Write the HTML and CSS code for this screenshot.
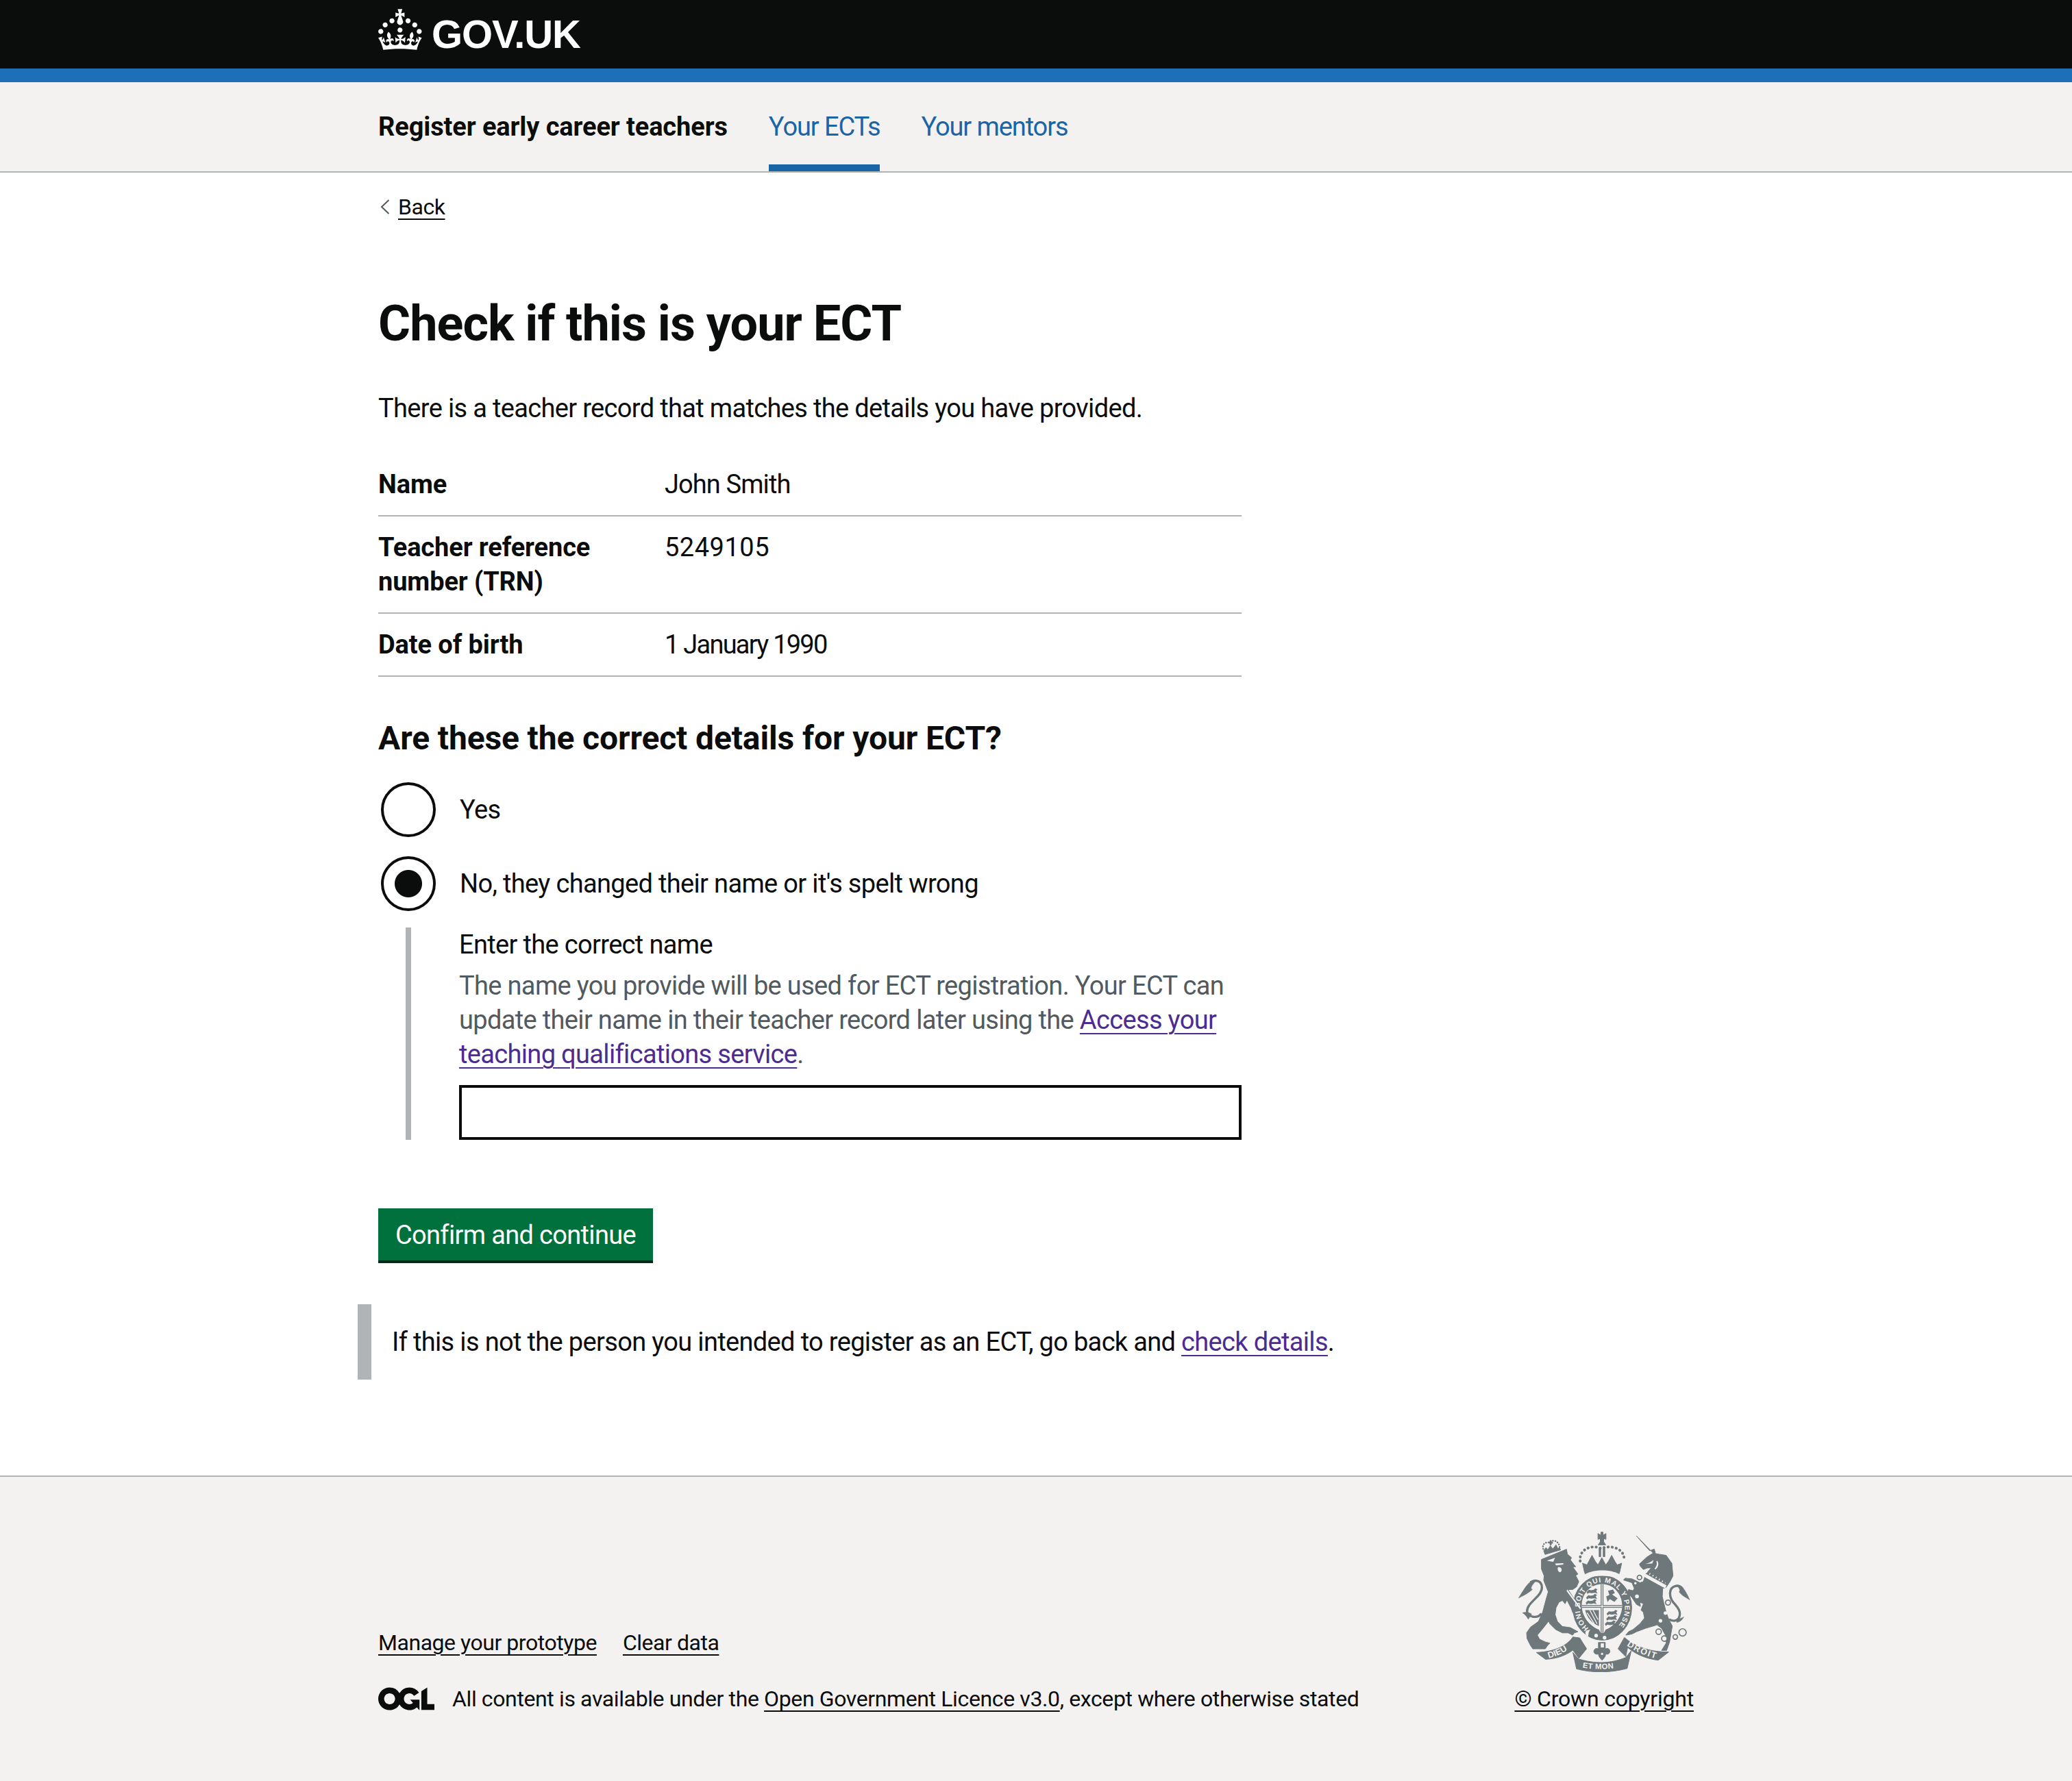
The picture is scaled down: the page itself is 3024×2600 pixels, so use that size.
FILE: index.html
```
<!DOCTYPE html>
<html lang="en">
<head>
<meta charset="utf-8">
<title>Check if this is your ECT</title>
<link rel="stylesheet" href="styles.css">
</head>
<body>
<header class="site-header">
  <div class="container header-inner">
    <svg class="crown" viewBox="0 0 32.2 30" width="64" height="60" aria-hidden="true"><path fill="currentColor" d="M22.6 10.4c-1 .4-2-.1-2.4-1-.4-.9.1-2 1-2.4.9-.4 2 .1 2.4 1s-.1 2-1 2.4m-5.9 6.7c-.9.4-2-.1-2.4-1-.4-.9.1-2 1-2.4.9-.4 2 .1 2.4 1s-.1 2-1 2.4m10.8-3.7c-1 .4-2-.1-2.4-1-.4-.9.1-2 1-2.4.9-.4 2 .1 2.4 1s0 2-1 2.4m3.3 4.8c-1 .4-2-.1-2.4-1-.4-.9.1-2 1-2.4.9-.4 2 .1 2.4 1s-.1 2-1 2.4M17 4.7l2.3 1.2V2.5l-2.3.7-.2-.2.9-3h-3.4l.9 3-.2.2c-.1.1-2.3-.7-2.3-.7v3.4L15 4.7c.1.1.1.2.2.2l-1.3 4c-.1.2-.1.4-.1.6 0 1.1.8 2 1.9 2.2h.7c1-.2 1.9-1.1 1.9-2.2 0-.2 0-.4-.1-.6l-1.3-4c-.1-.1 0-.2.1-.2m-7.6 5.7c.9.4 2-.1 2.4-1 .4-.9-.1-2-1-2.4-.9-.4-2 .1-2.4 1s0 2 1 2.4m-5 3c.9.4 2-.1 2.4-1 .4-.9-.1-2-1-2.4-.9-.4-2 .1-2.4 1s.1 2 1 2.4m-3.2 4.8c.9.4 2-.1 2.4-1 .4-.9-.1-2-1-2.4-.9-.4-2 .1-2.4 1s0 2 1 2.4m14.8 11c4.4 0 8.6.3 12.3.8 1.1-4.5 2.4-7 3.7-8.8l-2.5-.9c.2 1.3.3 1.9 0 2.7-.4-.4-.8-1.1-1.1-2.3l-1.2 4c.7-.5 1.3-.8 2-.9-1.1 2.5-2.6 3.1-3.5 3-1.1-.2-1.7-1.2-1.5-2.1.3-1.2 1.5-1.5 2.1-.1 1.1-2.3-.8-3-2-2.3 1.9-1.9 2.1-3.5.6-5.6-2.1 1.6-2.1 3.2-1.2 5.5-1.2-1.4-3.2-.6-2.5 1.6.9-1.4 2.1-.5 1.9.8-.2 1.1-1.7 2.1-3.5 1.9-2.7-.2-2.9-2.1-2.9-3.6.7-.1 1.9.5 2.9 1.9l.4-4.3c-1.1 1.1-2.1 1.4-3.2 1.4.4-1.2 2.1-3 2.1-3h-5.4s1.7 1.9 2.1 3c-1.1 0-2.1-.2-3.2-1.4l.4 4.3c1-1.4 2.2-2 2.9-1.9-.1 1.5-.2 3.4-2.9 3.6-1.9.2-3.4-.8-3.5-1.9-.2-1.3 1-2.2 1.9-.8.7-2.3-1.2-3-2.5-1.6.9-2.2.9-3.9-1.2-5.5-1.5 2-1.3 3.7.6 5.6-1.2-.7-3.1 0-2 2.3.6-1.4 1.8-1.1 2.1.1.2.9-.3 1.9-1.5 2.1-.9.2-2.4-.5-3.5-3 .6 0 1.2.3 2 .9l-1.2-4c-.3 1.1-.7 1.9-1.1 2.3-.3-.8-.2-1.4 0-2.7l-2.9.9C1.3 23 2.6 25.5 3.7 30c3.7-.5 7.9-.8 12.3-.8"/></svg>
    <span class="logotype">GOV.UK</span>
  </div>
</header>

<nav class="service-nav">
  <div class="container service-inner">
    <span class="service-name">Register early career teachers</span>
    <a class="nav-link nav-link-active" href="#">Your ECTs</a>
    <a class="nav-link" href="#">Your mentors</a>
  </div>
</nav>

<div class="container">
  <a class="back-link" href="#">
    <svg class="back-chevron" viewBox="0 0 14 22" width="14" height="22" aria-hidden="true"><path d="M12.5 1 2 11l10.5 10" fill="none" stroke="#505a5f" stroke-width="2"/></svg>
    <span class="back-text">Back</span>
  </a>

  <main class="main">
    <h1 class="title">Check if this is your ECT</h1>
    <p class="intro">There is a teacher record that matches the details you have provided.</p>

    <dl class="summary">
      <div class="summary-row"><dt>Name</dt><dd class="value-name">John Smith</dd></div>
      <div class="summary-row"><dt>Teacher reference number (TRN)</dt><dd class="value-trn">5249105</dd></div>
      <div class="summary-row"><dt>Date of birth</dt><dd class="value-date">1 January 1990</dd></div>
    </dl>

    <form class="form">
      <h2 class="question">Are these the correct details for your ECT?</h2>
      <div class="radio-item">
        <input class="radio-input" type="radio" name="correct" id="yes">
        <label class="radio-label" for="yes">Yes</label>
      </div>
      <div class="radio-item">
        <input class="radio-input" type="radio" name="correct" id="no" checked>
        <label class="radio-label" for="no">No, they changed their name or it's spelt wrong</label>
      </div>
      <div class="conditional">
        <label class="field-label" for="name">Enter the correct name</label>
        <div class="hint">The name you provide will be used for ECT registration. Your ECT can update their name in their teacher record later using the <a class="visited" href="#">Access your teaching qualifications service</a>.</div>
        <input class="text-input" type="text" id="name">
      </div>
      <button class="button" type="button">Confirm and continue</button>
    </form>

    <div class="inset">If this is not the person you intended to register as an ECT, go back and <a class="visited" href="#">check details</a>.</div>
  </main>
</div>

<footer class="footer">
  <div class="container footer-inner">
    <div class="footer-meta">
      <div class="footer-links">
        <a class="footer-link" href="#">Manage your prototype</a>
        <a class="footer-link" href="#">Clear data</a>
      </div>
      <div class="licence">
        <svg class="ogl" viewBox="0 0 483.2 195.7" width="82" height="34" aria-hidden="true"><path fill="currentColor" d="M421.5 142.8V.1l-50.7 32.3v161.1h112.4v-50.7zm-122.3-9.6A47.12 47.12 0 0 1 221 97.8c0-26 21.1-47.1 47.1-47.1 16.7 0 31.4 8.7 39.7 21.8l42.7-27.2A97.63 97.63 0 0 0 268.1 0c-36.5 0-68.3 20.1-85.1 49.7A98 98 0 0 0 97.8 0C43.9 0 0 43.9 0 97.8s43.9 97.8 97.8 97.8c36.5 0 68.3-20.1 85.1-49.7a97.76 97.76 0 0 0 149.6 25.4l19.4 22.2h3v-87.8h-80l24.3 27.5zM97.8 145c-26 0-47.1-21.1-47.1-47.1s21.1-47.1 47.1-47.1 47.2 21 47.2 47S123.8 145 97.8 145"/></svg>
        <span>All content is available under the <a class="footer-link" href="#">Open Government Licence v3.0</a>, except where otherwise stated</span>
      </div>
    </div>
    <div class="footer-crest">
      <svg class="crest" viewBox="105 76 755 616" width="252" height="205" aria-hidden="true">
        <defs>
          <path id="garter" d="M415 499A99 112 0 1 1 535 499"/>
          <path id="ribLeft" d="M236 632C280 622 322 602 352 570"/>
          <path id="ribMid" d="M386 672C440 682 510 682 560 668"/>
          <path id="ribRight" d="M580 574C620 602 670 624 728 638"/>
          <path id="beast" d="M-24 3-14-7-4-5 8-7 14-13 24-9 18-2 24 9 12 6-2 8-12 6-20 11Z"/>
        </defs>
        <g class="crest-dark crest-soft">
          <!-- lion's crown -->
          <path d="M224 176 218 160 228 146 236 156 247 138 258 152 272 134 280 150 288 146 292 156Z"/>
          <path d="M241 122h5v-7h5v7h6v5h-6v8h-5v-8h-5z"/>
          <!-- lion -->
          <path d="M208 198 318 153 322 175 340 190 335 200 358 230 345 230 368 262 358 268 372 295 362 318 345 330 325 330 380 415 382 432 365 432 358 445 345 430 338 410 328 392 320 375 312 392 300 378 285 385 272 410 268 440 278 470 300 492 335 497 368 515 352 520 345 530 325 520 300 520 270 505 245 480 240 468 215 500 190 530 200 548 225 560 245 565 235 575 225 590 195 590 170 590 160 575 145 545 143 520 160 495 195 470 213 430 232 360 238 340 218 290 220 270 208 240Z"/>
          <!-- unicorn -->
          <path d="M625 95 683 160 703 152 708 172 725 175 755 180 780 215 785 270 772 295 755 320 740 325 738 360 745 390 755 430 767 462 782 490 775 530 770 560 757 597 735 597 755 565 752 530 735 500 715 485 665 500 625 515 605 525 578 530 590 515 610 505 640 480 660 455 655 430 645 420 655 392 640 385 642 404 625 395 605 365 585 345 590 330 610 335 615 325 605 300 568 288 575 280 605 283 640 300 655 295 665 262 690 235 672 235 655 242 642 228 638 218 670 188 698 170Z"/>
          <!-- shield crown -->
          <path d="M396 250 388 214 408 222 416 206 430 180 444 206 456 222 473 190 490 222 502 206 516 180 530 206 540 222 560 214 552 250Z"/>
          <path d="M466 120V106L456 110V84L469 92V78H478V92L491 84V110L481 106V120L490 134H457Z"/>
          <path d="M461 150h7v36h-7zM479 150h7v36h-7z"/>
          <path d="M396 250C440 236 510 236 552 250L548 262H400Z"/>
          <!-- garter -->
          <ellipse cx="475" cy="410" rx="129" ry="142"/>
          <!-- fleur -->
          <path d="M458 562h30v28c14-6 22 4 20 14-2 8-10 12-18 8 0 10-6 18-16 28-10-10-16-18-16-28-8 4-18 0-20-8-2-10 8-20 20-14z"/>
          <!-- ribbons -->
          <path d="M186 606C270 602 320 576 346 538L376 542 406 590 372 632 346 596C310 622 270 634 226 636Z"/>
          <path d="M346 606 370 634C440 656 510 656 578 628L602 598 584 676C510 696 430 696 362 678Z"/>
          <path d="M544 590 572 540C620 584 690 604 766 604L720 640C660 632 620 612 586 584L578 624Z"/>
        </g>
        <g class="crest-line">
          <path class="crest-pearls" d="M378 205C372 155 425 130 470 150C520 130 578 155 570 205"/>
          <path class="crest-pearls-small" d="M216 152C208 125 235 120 245 124C255 108 285 115 288 145"/>
          <path class="crest-tail" d="M208 435C190 460 145 450 145 425C145 385 212 360 210 320C210 290 180 285 160 298"/>
          <path class="crest-tail" d="M768 460C790 475 815 465 815 435C815 400 770 390 772 345C775 310 815 305 828 328"/>
          <path class="crest-tuft" d="M188 288C160 282 140 315 108 367C130 355 145 350 168 330C155 325 170 305 188 288Z"/>
          <path class="crest-tuft" d="M125 432C140 428 152 428 165 438L150 460C145 448 135 438 125 432Z"/>
          <path class="crest-tuft" d="M800 310C825 305 845 345 858 375C838 362 825 358 812 340C820 335 810 320 800 310Z"/>
          <path class="crest-tuft" d="M800 462C815 458 825 455 832 450C826 464 815 472 802 474Z"/>
        </g>
        <g class="crest-ring">
          <circle cx="638" cy="277" r="10"/><circle cx="620" cy="302" r="8"/><circle cx="627" cy="360" r="11"/>
          <circle cx="763" cy="387" r="11"/>
          <circle cx="722" cy="515" r="12"/><circle cx="747" cy="545" r="12"/><circle cx="795" cy="538" r="10"/><circle cx="827" cy="518" r="16"/>
        </g>
        <g class="crest-light">
          <path d="M400 262C440 240 510 240 550 262 554 270 548 276 540 280 500 266 445 266 410 280 402 276 398 270 400 262Z"/>
          <path d="M385 400C385 345 425 308 473 306C525 306 562 350 562 400C562 450 530 490 490 506L482 520H468L460 506C420 490 385 450 385 400Z"/>
          <circle cx="752" cy="433" r="8"/><circle cx="730" cy="467" r="8"/>
          <circle cx="448" cy="532" r="8"/><circle cx="485" cy="541" r="8"/>
          <path d="M404 510C398 520 400 532 412 538 416 528 412 520 422 506Z"/>
          <path d="M660 258 757 312 750 325 655 272Z"/>
          <path d="M664 217C680 214 690 208 700 200L694 216Z"/>
          <path d="M716 204C724 216 722 230 708 242L704 238C714 228 716 216 712 206Z"/>
          <path d="M232 204 268 190 260 208Z"/>
          <path d="M280 232C298 228 302 250 290 254 280 252 278 242 280 232Z"/>
          <path d="M268 216 304 214 304 220 272 224Z"/>
          <path d="M322 330 382 412 377 416 318 336Z"/>
          <path d="M468 566h14v18h-14z"/><circle cx="474" cy="612" r="5"/>
        </g>
        <path class="crest-collar" d="M668 252 752 302"/>
        <g class="crest-dark">
          <rect x="468" y="306" width="12" height="214"/>
          <rect x="385" y="398" width="177" height="12"/>
        </g>
        <g class="crest-light"><rect x="472" y="306" width="4" height="214"/><rect x="385" y="402" width="177" height="4"/></g>
        <g class="crest-dark crest-beasts">
          <use href="#beast" x="430" y="338"/><use href="#beast" x="428" y="362"/><use href="#beast" x="426" y="385"/>
          <use href="#beast" x="518" y="432"/><use href="#beast" x="516" y="455"/><use href="#beast" x="510" y="478"/>
          <path d="M500 335 522 330 530 345 518 352 542 368 528 384 508 372 498 385 492 360 506 354Z"/>
          <path d="M400 420H460V490C430 478 408 455 400 420Z"/>
        </g>
        <path class="crest-harp" d="M420 420 452 480M434 420 456 462M408 432 440 480"/>
        <g class="crest-text">
          <text class="garter-text"><textPath href="#garter" textLength="515" lengthAdjust="spacing">HONI SOIT QUI MAL Y PENSE</textPath></text>
          <text class="ribbon-text"><textPath href="#ribLeft" startOffset="4">DIEU</textPath></text>
          <text class="ribbon-mid"><textPath href="#ribMid" startOffset="2">ET MON</textPath></text>
          <text class="ribbon-text"><textPath href="#ribRight" startOffset="2" textLength="140" lengthAdjust="spacing">DROIT</textPath></text>
        </g>
      </svg>
      <a class="footer-link copyright" href="#">© Crown copyright</a>
    </div>
  </div>
</footer>
</body>
</html>
```
FILE: styles.css
```
* { box-sizing: border-box; }

body {
  margin: 0;
  font-family: Roboto, "Liberation Sans", sans-serif;
  font-size: 38px;
  line-height: 50px;
  letter-spacing: -0.66px;
  color: #0b0c0c;
  background: #fff;
}

.container { width: 1920px; margin: 0 auto; }

/* Header */
.site-header {
  height: 120px;
  background: #0b0c0c;
  border-bottom: 20px solid #1d70b8;
  color: #fff;
}
.header-inner { display: flex; align-items: center; height: 100px; gap: 14px; }
.crown { display: block; flex: none; margin-top: -14px; }
.logotype {
  font-family: "Liberation Sans", Arial, sans-serif;
  font-size: 58px;
  font-weight: 700;
  line-height: 60px;
  letter-spacing: -1.1px;
}

/* Service navigation */
.service-nav { height: 132px; background: #f3f2f1; border-bottom: 2px solid #b1b4b6; }
.service-inner { display: flex; height: 130px; align-items: stretch; gap: 60px; }
.service-name { display: flex; align-items: center; font-weight: 700; letter-spacing: -0.11px; }
.nav-link {
  display: flex;
  align-items: center;
  padding-top: 10px;
  border-bottom: 10px solid transparent;
  color: #1a65a6;
  text-decoration: none;
  letter-spacing: -1.1px;
}
.nav-link-active { border-bottom-color: #1a65a6; }

/* Back link */
.back-link {
  display: flex;
  width: max-content;
  align-items: center;
  gap: 12px;
  margin: 30px 0 0 3px;
  font-size: 32px;
  line-height: 40px;
  letter-spacing: -0.46px;
  color: #0b0c0c;
  text-decoration: none;
}
.back-chevron { display: block; flex: none; }
.back-text {
  text-decoration: underline;
  text-decoration-thickness: 2px;
  text-underline-offset: 6px;
}

/* Main */
.main { padding-top: 111px; padding-bottom: 140px; }
.title {
  margin: 0 0 58px;
  font-size: 72px;
  line-height: 80px;
  font-weight: 700;
  letter-spacing: -0.98px;
}
.intro { margin: 0 0 41px; }

.summary { width: 1260px; margin: 0 0 60px; }
.summary-row { display: flex; border-bottom: 2px solid #b1b4b6; padding: 20px 0; }
.summary-row dt { width: 378px; margin-right: 40px; font-weight: 700; letter-spacing: -0.11px; flex: none; }
.summary-row dd { margin: 0; }
.summary-row .value-name { letter-spacing: -0.9px; }
.summary-row .value-trn { letter-spacing: 0.5px; }
.summary-row .value-date { letter-spacing: -1.75px; }

.form { width: 1260px; }
.question { margin: 0 0 30px; font-size: 48px; line-height: 60px; font-weight: 700; letter-spacing: -0.12px; }

.radio-item { display: flex; align-items: center; min-height: 88px; margin-bottom: 20px; }
.radio-input {
  appearance: none;
  flex: none;
  width: 80px;
  height: 80px;
  margin: 0 0 0 4px;
  border: 4px solid #0b0c0c;
  border-radius: 50%;
  background: #fff;
}
.radio-input:checked { background: radial-gradient(circle closest-side, #0b0c0c 19.5px, #fff 20.5px); }
.radio-label { margin-left: 35px; }

.conditional { margin-left: 40px; padding-left: 70px; border-left: 8px solid #b1b4b6; }
.field-label { display: block; margin-bottom: 10px; }
.hint { margin-bottom: 20px; color: #505a5f; }
.visited { color: #4c2c92; text-decoration: underline; text-decoration-thickness: 2px; text-underline-offset: 6px; }
.text-input {
  display: block;
  width: 100%;
  height: 80px;
  padding: 10px;
  border: 4px solid #0b0c0c;
  border-radius: 0;
  background: #fff;
  font: inherit;
  outline: none;
}

.button {
  display: block;
  width: 401px;
  height: 76px;
  margin: 100px 0 64px;
  padding: 2px 0 0;
  border: 0;
  background: #00703c;
  box-shadow: 0 4px 0 #002d18;
  color: #fff;
  font: inherit;
  letter-spacing: inherit;
}

.inset {
  width: max-content;
  margin-left: -30px;
  padding: 30px;
  border-left: 20px solid #b1b4b6;
}

/* Footer */
.footer {
  height: 446px;
  padding: 80px 0 100px;
  background: #f3f2f1;
  border-top: 2px solid #b1b4b6;
  font-size: 32px;
  line-height: 40px;
  letter-spacing: -0.46px;
}
.footer-inner { display: flex; justify-content: space-between; align-items: flex-end; }
.footer-links { display: flex; gap: 38px; margin-bottom: 42px; }
.footer-link {
  color: #0b0c0c;
  text-decoration: underline;
  text-decoration-thickness: 2px;
  text-underline-offset: 6px;
}
.licence { display: flex; align-items: center; gap: 26px; letter-spacing: -0.38px; }
.ogl { display: block; flex: none; color: #0b0c0c; }
.footer-crest { display: flex; flex-direction: column; align-items: center; }
.copyright { letter-spacing: -0.2px; }

/* Royal arms */
.crest { display: block; margin-bottom: 19px; }
.crest-dark { fill: #6e7779; }
.crest-soft { stroke: #6e7779; stroke-width: 3px; stroke-linejoin: round; }
.crest-light { fill: #f3f2f1; }
.crest-line { fill: none; stroke: #6e7779; }
.crest-pearls { stroke-width: 12px; stroke-dasharray: 1 17; stroke-linecap: round; }
.crest-pearls-small { stroke-width: 7px; stroke-dasharray: 1 10; stroke-linecap: round; }
.crest-tail { stroke-width: 10px; }
.crest-tuft { fill: #6e7779; stroke-width: 2px; }
.crest-ring { fill: #f3f2f1; stroke: #6e7779; stroke-width: 5px; }
.crest-collar { fill: none; stroke: #f3f2f1; stroke-width: 8px; stroke-dasharray: 4 12; }
.crest-harp { fill: none; stroke: #f3f2f1; stroke-width: 4px; }
.crest-text { fill: #f3f2f1; font-family: "Liberation Sans", Arial, sans-serif; font-weight: 700; letter-spacing: 0; }
.garter-text { font-size: 31px; }
.ribbon-text { font-size: 38px; }
.ribbon-mid { font-size: 34px; letter-spacing: 1px; }
```
